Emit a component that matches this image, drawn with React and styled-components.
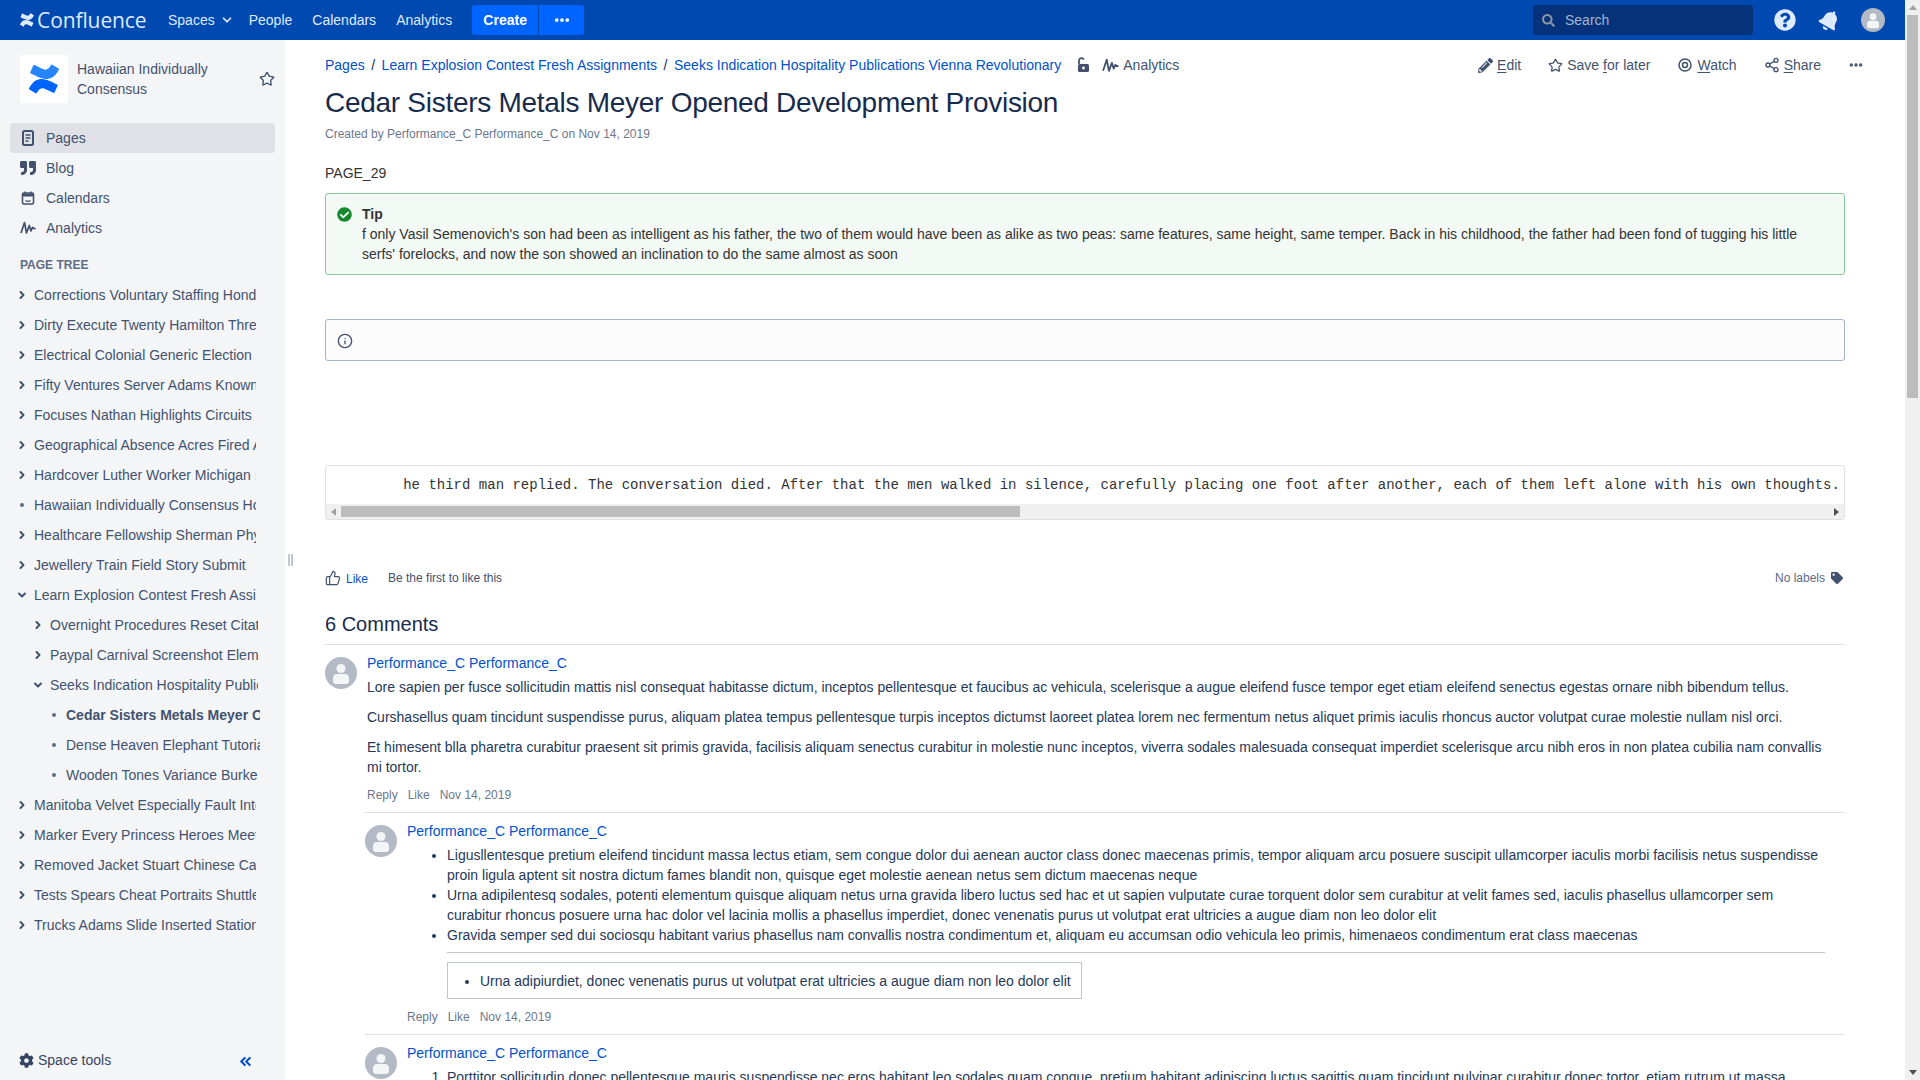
import React from 'react';
import styled, { createGlobalStyle } from 'styled-components';
import { FaQuoteRight, FaPencilAlt, FaCheckCircle, FaTag, FaCog, FaSearch, FaQuestionCircle, FaBell } from 'react-icons/fa';
import { ChevronRight, ChevronDown, ChevronsLeft, Star, Info, ThumbsUp, Share2, MoreHorizontal } from 'lucide-react';

const GlobalStyle = createGlobalStyle`
  body {
    margin: 0;
    background: #fff;
    color: #172b4d;
    font-family: "Liberation Sans", Arial, sans-serif;
    font-size: 14px;
    line-height: 20px;
  }
  * { box-sizing: border-box; }
`;

const tree = [
  { level: 0, text: 'Corrections Voluntary Staffing Honduras Premium' },
  { level: 0, text: 'Dirty Execute Twenty Hamilton Three Reverse' },
  { level: 0, text: 'Electrical Colonial Generic Election' },
  { level: 0, text: 'Fifty Ventures Server Adams Known Rapid' },
  { level: 0, text: 'Focuses Nathan Highlights Circuits' },
  { level: 0, text: 'Geographical Absence Acres Fired Annual' },
  { level: 0, text: 'Hardcover Luther Worker Michigan Illinois' },
  { level: 0, kind: 'leaf', text: 'Hawaiian Individually Consensus Home' },
  { level: 0, text: 'Healthcare Fellowship Sherman Physical' },
  { level: 0, text: 'Jewellery Train Field Story Submit' },
  { level: 0, kind: 'open', text: 'Learn Explosion Contest Fresh Assignments' },
  { level: 1, text: 'Overnight Procedures Reset Citation Trail' },
  { level: 1, text: 'Paypal Carnival Screenshot Elements Outer' },
  { level: 1, kind: 'open', text: 'Seeks Indication Hospitality Publications' },
  { level: 2, kind: 'leaf', current: true, text: 'Cedar Sisters Metals Meyer Opened' },
  { level: 2, kind: 'leaf', text: 'Dense Heaven Elephant Tutorial Finder' },
  { level: 2, kind: 'leaf', text: 'Wooden Tones Variance Burke Country' },
  { level: 0, text: 'Manitoba Velvet Especially Fault Intent Door' },
  { level: 0, text: 'Marker Every Princess Heroes Meet Again' },
  { level: 0, text: 'Removed Jacket Stuart Chinese Campus Fold' },
  { level: 0, text: 'Tests Spears Cheat Portraits Shuttle Media' },
  { level: 0, text: 'Trucks Adams Slide Inserted Stationery Plan' },
];

const Page = styled.div`
  min-height: 2961px;
  padding-right: 15px;
  display: flex;
  flex-direction: column;
`;

/* the browser hides real scrollbars here, so they are drawn */
const PageScrollbar = styled.div`
  position: fixed;
  top: 0;
  right: 0;
  bottom: 0;
  width: 15px;
  background: #f0f0f0;
  display: flex;
  flex-direction: column;
  align-items: center;
`;

const ScrollThumb = styled.div`
  background: #bcbcbc;
  flex: none;
  width: ${p => p.$w};
  height: ${p => p.$h};
`;

const ScrollArrow = styled.div`
  flex: none;
  width: 15px;
  height: 15px;
  display: flex;
  align-items: center;
  justify-content: center;
  margin-${p => p.$auto || 'top'}: ${p => (p.$auto ? 'auto' : '0')};
  &::before {
    content: "";
    border-style: solid;
    border-color: transparent;
    border-width: ${p => (p.$dir === 'up' ? '0 4px 5px' : p.$dir === 'down' ? '5px 4px 0' : p.$dir === 'left' ? '4px 5px 4px 0' : '4px 0 4px 5px')};
    border-${p => ({ up: 'bottom', down: 'top', left: 'right', right: 'left' }[p.$dir])}-color: ${p => p.$color};
  }
`;

const Header = styled.header`
  height: 40px;
  flex: none;
  background: #0049b0;
  display: flex;
  align-items: center;
  padding: 0 10px 0 20px;
  color: #deebff;
`;

const Logo = styled.div`
  display: flex;
  align-items: center;
  gap: 3px;
  width: 148px;
  color: #deebff;
  font-family: "Open Sans", sans-serif;
  font-size: 21px;
  letter-spacing: -0.1px;
`;

const NavLink = styled.span`
  display: flex;
  align-items: center;
  gap: 5px;
  margin-right: 20px;
`;

const SpacesChevron = styled(ChevronDown)`
  margin-right: -5px;
`;

const CreateGroup = styled.div`
  display: flex;
  gap: 1px;
`;

const CreateButton = styled.div`
  height: 30px;
  width: ${p => p.$width}px;
  background: #0065ff;
  color: #fff;
  font-weight: bold;
  display: flex;
  align-items: center;
  justify-content: center;
  border-radius: ${p => p.$radius};
`;

const HeaderRight = styled.div`
  margin-left: auto;
  display: flex;
  align-items: center;
`;

const SearchBox = styled.div`
  width: 220px;
  height: 30px;
  background: #05327a;
  border-radius: 3px;
  display: flex;
  align-items: center;
  gap: 10px;
  padding-left: 9px;
  margin-right: 10px;
  color: #a5b4cf;
  svg { color: #8993a4; }
`;

const HeaderIcon = styled.div`
  width: 44px;
  display: flex;
  justify-content: center;
  align-items: center;
`;

const TiltedBell = styled(FaBell)`
  transform: rotate(30deg);
`;

const Body = styled.div`
  display: flex;
  flex: 1;
`;

const Sidebar = styled.aside`
  flex: 0 0 285px;
  height: 1040px;
  position: sticky;
  top: 0;
  background: #f4f5f7;
  color: #42526e;
  display: flex;
  flex-direction: column;
`;

const SpaceHead = styled.div`
  display: flex;
  align-items: center;
  padding: 15px 10px 0 20px;
  height: 63px;
  flex: none;
`;

const SpaceLogo = styled.div`
  width: 48px;
  height: 48px;
  background: #fff;
  border-radius: 3px;
  display: flex;
  align-items: center;
  justify-content: center;
  flex: none;
`;

const SpaceName = styled.div`
  margin-left: 9px;
  width: 140px;
  flex: none;
`;

const SpaceStar = styled.div`
  margin-left: 42px;
  display: flex;
`;

const SideNav = styled.nav`
  margin: 20px 10px 0;
`;

const SideItem = styled.div`
  height: 30px;
  display: flex;
  align-items: center;
  padding-left: 10px;
  gap: 10px;
  border-radius: 3px;
  background: ${p => (p.$active ? '#dfe1e6' : 'transparent')};
  svg { flex: none; }
`;

const TreeTitle = styled.div`
  margin: 14px 0 0 20px;
  font-size: 12px;
  font-weight: bold;
  line-height: 16px;
  color: #5e6c84;
`;

const TreeList = styled.div`
  margin-top: 7px;
`;

const TreeRow = styled.div`
  height: 30px;
  display: flex;
  align-items: center;
  padding-left: ${p => 16 + p.$level * 16}px;
`;

const TreeToggle = styled.div`
  width: 18px;
  flex: none;
  display: flex;
  align-items: center;
`;

const Dot = styled.span`
  width: 4px;
  height: 4px;
  margin-left: 4px;
  border-radius: 50%;
  background: #5e6c84;
`;

const TreeText = styled.div`
  width: ${p => 222 - p.$level * 14}px;
  overflow: hidden;
  white-space: nowrap;
  font-weight: ${p => (p.$current ? 'bold' : 'normal')};
`;

const SideFooter = styled.div`
  margin-top: auto;
  height: 40px;
  display: flex;
  align-items: center;
  padding: 0 31px 0 19px;
  color: #344563;
  gap: 4px;
`;

const Collapse = styled.div`
  margin-left: auto;
  display: flex;
  margin-top: 3px;
  color: #0052cc;
`;

const Splitter = styled.div`
  position: absolute;
  right: -8px;
  top: 514px;
  width: 5px;
  height: 12px;
  border-left: 2px solid #c1c7d0;
  border-right: 2px solid #c1c7d0;
`;

const Main = styled.main`
  flex: 1;
  min-width: 0;
  padding: 0 60px 0 40px;
`;

const TopRow = styled.div`
  display: flex;
  align-items: center;
  height: 20px;
  margin-top: 15px;
`;

const Crumbs = styled.div`
  display: flex;
  align-items: center;
  gap: 6.5px;
  flex: 1;
`;

const Link = styled.a`
  color: #0052cc;
  text-decoration: none;
`;

const Muted = styled.span`
  display: inline-flex;
  align-items: center;
  gap: 4px;
  color: #42526e;
  margin-left: ${p => p.$gap || 0}px;
`;

const Actions = styled.div`
  display: flex;
  align-items: center;
  color: #42526e;
  margin-right: -19px;
`;

const Action = styled.span`
  display: flex;
  align-items: center;
  gap: 4px;
  margin-right: 27px;
  u { text-underline-offset: 2px; }
`;

const Title = styled.h1`
  margin: 8px 0 0;
  font-size: 28px;
  font-weight: normal;
  line-height: 40px;
  letter-spacing: -0.01em;
  color: #172b4d;
`;

const Byline = styled.div`
  margin-top: 3px;
  font-size: 12px;
  line-height: 16px;
  color: #6b778c;
`;

const PageId = styled.p`
  margin: 21px 0 0;
  color: #333;
`;

const Panel = styled.div`
  position: relative;
  margin-top: ${p => p.$top}px;
  min-height: ${p => p.$height}px;
  padding: 10px 20px 10px 36px;
  border: 1px solid ${p => p.$border};
  background: ${p => p.$bg};
  border-radius: 3px;
  color: #333;
  svg { position: absolute; left: 11px; top: 13px; }
`;

const PanelTitle = styled.div`
  font-weight: bold;
`;

const CodeBlock = styled.div`
  margin-top: 104px;
  border: 1px solid #dfe1e6;
  border-radius: 3px;
  overflow: hidden;
  background: #fff;
`;

const Code = styled.pre`
  margin: 0;
  padding: 9px 10px 9px;
  overflow: hidden;
  font-family: "Liberation Mono", "Courier New", monospace;
  font-size: 14px;
  line-height: 20px;
  color: #333;
`;

const CodeScrollbar = styled.div`
  height: 15px;
  background: #f0f0f0;
  display: flex;
  align-items: center;
`;

const LikeRow = styled.div`
  margin-top: 48px;
  height: 20px;
  display: flex;
  align-items: center;
  font-size: 12px;
  color: #42526e;
`;

const LikeLink = styled.a`
  color: #0052cc;
  margin: 1px 20px 0 5px;
`;

const Labels = styled.div`
  margin-left: auto;
  display: flex;
  align-items: center;
  gap: 6px;
  color: #5e6c84;
  padding-right: 2px;
`;

const CommentsTitle = styled.h2`
  margin: 20px 0 0;
  padding-bottom: 4px;
  font-size: 20px;
  font-weight: normal;
  line-height: 32px;
  border-bottom: 1px solid #dfe1e6;
`;

const CommentWrap = styled.div`
  display: flex;
  gap: 10px;
  margin-left: ${p => (p.$nested ? 40 : 0)}px;
  padding-top: 8px;
  border-top: ${p => (p.$first ? 'none' : '1px solid #dfe1e6')};
  margin-top: ${p => (p.$first ? 0 : 7)}px;
`;

const AvatarSlot = styled.div`
  flex: none;
  width: 32px;
  height: 32px;
  margin-top: 4px;
  display: flex;
`;

const CommentBody = styled.div`
  flex: 1;
  min-width: 0;
  color: #253858;
`;

const Para = styled.p`
  margin: ${p => (p.$gap ? 10 : 4)}px 0 0;
  padding-right: 10px;
`;

const ReplyList = styled.ul`
  margin: 4px 0 0;
  padding-left: 40px;
  padding-right: 20px;
`;

const NumList = styled.ol`
  margin: 4px 0 0;
  padding-left: 40px;
  padding-right: 20px;
`;

const QuoteWrap = styled.div`
  padding: 0 20px 0 40px;
`;

const Rule = styled.hr`
  border: none;
  border-top: 1px solid #c1c7d0;
  margin: 7px 0 0;
`;

const Quote = styled.div`
  width: fit-content;
  margin-top: 9px;
  border: 1px solid #c1c7d0;
  padding: 8px 10px 7px 0;
  ul { margin: 0; padding-left: 32px; }
`;

const Meta = styled.div`
  display: flex;
  gap: 10px;
  margin-top: 8px;
  font-size: 12px;
  line-height: 20px;
  color: #6b778c;
`;

const ConfluenceMark = ({ size, color, color2 }) => (
  <svg width={size} height={size} viewBox="0 0 256 246">
    <path fill={color} d="M9.26,187.33c-2.64,4.3-5.6,9.29-8.12,13.27a8.1,8.1,0,0,0,2.71,11l52.8,32.49a8.12,8.12,0,0,0,11.24-2.76c2.11-3.53,4.83-8.12,7.79-13,20.92-34.53,41.96-30.31,79.9-12.19l52.35,24.9a8.12,8.12,0,0,0,10.92-4.06l25.14-56.86a8.12,8.12,0,0,0-4-10.62c-11.05-5.2-33-15.55-52.8-25.09C116.98,109.22,53.45,111.56,9.26,187.33Z" />
    <path fill={color2 || color} d="M246.11,58.24c2.64-4.3,5.6-9.29,8.12-13.27a8.1,8.1,0,0,0-2.71-11L198.72,1.48a8.12,8.12,0,0,0-11.58,2.68c-2.11,3.53-4.83,8.12-7.79,13-20.92,34.53-41.96,30.31-79.9,12.19L47.2,4.54A8.12,8.12,0,0,0,36.28,8.6L11.14,65.46a8.12,8.12,0,0,0,4,10.62c11.05,5.2,33,15.55,52.8,25.09C138.39,135.25,201.92,132.91,246.11,58.24Z" />
  </svg>
);

const Avatar = ({ size = 32 }) => (
  <svg width={size} height={size} viewBox="0 0 32 32">
    <circle cx="16" cy="16" r="16" fill="#b3bac5" />
    <circle cx="16" cy="11.5" r="4.5" fill="#f4f5f7" />
    <path fill="#f4f5f7" d="M8 21c0-2.5 2-4 4-4h8c2 0 4 1.500 4 4v3.500c0 1-1.500 2.500-3 2.500h-10c-1.500 0-3-1.500-3-2.500z" />
  </svg>
);

const PageIcon = () => (
  <svg width="16" height="18" viewBox="0 0 16 18" fill="none">
    <rect x="3" y="2" width="10" height="14" rx="1.500" stroke="#42526e" strokeWidth="2" />
    <path d="M5.500 6h5M5.500 9h5M5.500 12h3" stroke="#42526e" strokeWidth="1.500" />
  </svg>
);

const CalendarIcon = () => (
  <svg width="16" height="16" viewBox="0 0 16 16" fill="none">
    <rect x="2.500" y="3" width="11" height="11" rx="1.500" stroke="#42526e" strokeWidth="1.600" />
    <path d="M2.500 3.500h11v3h-11z" fill="#42526e" />
    <path d="M5.500 10.500c1.500 1 3.500 1 5 0" stroke="#42526e" strokeWidth="1.300" />
    <path d="M5 1.500v2M11 1.500v2" stroke="#42526e" strokeWidth="1.500" />
  </svg>
);

const PulseIcon = ({ size = 16 }) => (
  <svg width={size} height={size} viewBox="0 0 16 16" fill="none">
    <path d="M1 13 4.500 2.500 6.500 13 9.300 5.500 11 11l1.500-3.500 3 1.500" stroke="#42526e" strokeWidth="1.700" strokeLinejoin="round" />
  </svg>
);

const LockIcon = () => (
  <svg width="14" height="16" viewBox="0 0 14 16" fill="none">
    <path d="M3 7V3.500A2.500 2.500 0 0 1 7.800 2.700" stroke="#42526e" strokeWidth="1.800" />
    <rect x="2" y="7" width="11" height="8" rx="1.500" fill="#42526e" />
    <circle cx="7.500" cy="11" r="1.400" fill="#fff" />
  </svg>
);

const EyeIcon = () => (
  <svg width="16" height="16" viewBox="0 0 16 16" fill="none">
    <circle cx="8" cy="8" r="6" stroke="#42526e" strokeWidth="1.500" />
    <circle cx="8" cy="8" r="2.500" stroke="#42526e" strokeWidth="1.500" />
  </svg>
);

const Comment = ({ nested, first, children }) => (
  <CommentWrap $nested={nested} $first={first}>
    <AvatarSlot><Avatar /></AvatarSlot>
    <CommentBody>
      <Link>Performance_C Performance_C</Link>
      {children}
      <Meta><span>Reply</span><span>Like</span><span>Nov 14, 2019</span></Meta>
    </CommentBody>
  </CommentWrap>
);

const SideTree = () => (
  <TreeList>
    {tree.map(item => (
      <TreeRow key={item.text} $level={item.level}>
        <TreeToggle>
          {item.kind === 'leaf' && <Dot />}
          {item.kind === 'open' && <ChevronDown size={12} strokeWidth={4} color="#42526e" />}
          {!item.kind && <ChevronRight size={12} strokeWidth={4} color="#42526e" />}
        </TreeToggle>
        <TreeText $level={item.level} $current={item.current}>{item.text}</TreeText>
      </TreeRow>
    ))}
  </TreeList>
);

export default function App() {
  return (
    <Page>
      <GlobalStyle />
      <PageScrollbar>
        <ScrollArrow $dir="up" $color="#a3a3a3" />
        <ScrollThumb $w="11px" $h="383px" />
        <ScrollArrow $dir="down" $color="#505050" $auto="top" />
      </PageScrollbar>
      <Header>
        <Logo><ConfluenceMark size={14} color="#deebff" />Confluence</Logo>
        <NavLink>Spaces <SpacesChevron size={14} strokeWidth={3} /></NavLink>
        <NavLink>People</NavLink>
        <NavLink>Calendars</NavLink>
        <NavLink>Analytics</NavLink>
        <CreateGroup>
          <CreateButton $width={66} $radius="3px 0 0 3px">Create</CreateButton>
          <CreateButton $width={45} $radius="0 3px 3px 0"><MoreHorizontal size={18} strokeWidth={3} /></CreateButton>
        </CreateGroup>
        <HeaderRight>
          <SearchBox><FaSearch size={13} />Search</SearchBox>
          <HeaderIcon><FaQuestionCircle size={22} /></HeaderIcon>
          <HeaderIcon><TiltedBell size={21} /></HeaderIcon>
          <HeaderIcon><Avatar size={24} /></HeaderIcon>
        </HeaderRight>
      </Header>
      <Body>
        <Sidebar>
          <Splitter />
          <SpaceHead>
            <SpaceLogo><ConfluenceMark size={30} color="#0065ff" color2="#2684ff" /></SpaceLogo>
            <SpaceName>Hawaiian Individually Consensus</SpaceName>
            <SpaceStar><Star size={16} strokeWidth={2} color="#42526e" /></SpaceStar>
          </SpaceHead>
          <SideNav>
            <SideItem $active><PageIcon />Pages</SideItem>
            <SideItem><FaQuoteRight size={16} color="#42526e" />Blog</SideItem>
            <SideItem><CalendarIcon />Calendars</SideItem>
            <SideItem><PulseIcon />Analytics</SideItem>
          </SideNav>
          <TreeTitle>PAGE TREE</TreeTitle>
          <SideTree />
          <SideFooter>
            <FaCog size={15} color="#344563" />Space tools
            <Collapse><ChevronsLeft size={17} strokeWidth={3} /></Collapse>
          </SideFooter>
        </Sidebar>
        <Main>
          <TopRow>
            <Crumbs>
              <Link>Pages</Link>/
              <Link>Learn Explosion Contest Fresh Assignments</Link>/
              <Link>Seeks Indication Hospitality Publications Vienna Revolutionary</Link>
              <Muted $gap={8}><LockIcon /></Muted>
              <Muted $gap={6}><PulseIcon size={17} />Analytics</Muted>
            </Crumbs>
            <Actions>
              <Action><FaPencilAlt size={15} /><span><u>E</u>dit</span></Action>
              <Action><Star size={15} strokeWidth={2} /><span>Save <u>f</u>or later</span></Action>
              <Action><EyeIcon /><span><u>W</u>atch</span></Action>
              <Action><Share2 size={16} strokeWidth={2} /><span><u>S</u>hare</span></Action>
              <MoreHorizontal size={16} strokeWidth={3} />
            </Actions>
          </TopRow>
          <Title>Cedar Sisters Metals Meyer Opened Development Provision</Title>
          <Byline>Created by Performance_C Performance_C on Nov 14, 2019</Byline>
          <PageId>PAGE_29</PageId>
          <Panel $top={10} $height={82} $border="#87c99b" $bg="#f3f9f4">
            <FaCheckCircle size={15} color="#14892c" />
            <PanelTitle>Tip</PanelTitle>
            f only Vasil Semenovich's son had been as intelligent as his father, the two of them would have been as alike as two peas: same features, same height, same temper. Back in his childhood, the father had been fond of tugging his little serfs' forelocks, and now the son showed an inclination to do the same almost as soon
          </Panel>
          <Panel $top={44} $height={42} $border="#a5b4c8" $bg="#fcfcfd">
            <Info size={16} strokeWidth={2} color="#42526e" />
          </Panel>
          <CodeBlock>
            <Code>{'        he third man replied. The conversation died. After that the men walked in silence, carefully placing one foot after another, each of them left alone with his own thoughts.'}</Code>
            <CodeScrollbar>
              <ScrollArrow $dir="left" $color="#a3a3a3" />
              <ScrollThumb $w="679px" $h="11px" />
              <ScrollArrow $dir="right" $color="#505050" $auto="left" />
            </CodeScrollbar>
          </CodeBlock>
          <LikeRow>
            <ThumbsUp size={16} strokeWidth={1.800} color="#42526e" />
            <LikeLink>Like</LikeLink>
            Be the first to like this
            <Labels>No labels <FaTag size={12} color="#42526e" /></Labels>
          </LikeRow>
          <CommentsTitle>6 Comments</CommentsTitle>
          <Comment first>
            <Para>Lore sapien per fusce sollicitudin mattis nisl consequat habitasse dictum, inceptos pellentesque et faucibus ac vehicula, scelerisque a augue eleifend fusce tempor eget etiam eleifend senectus egestas ornare nibh bibendum tellus.</Para>
            <Para $gap>Curshasellus quam tincidunt suspendisse purus, aliquam platea tempus pellentesque turpis inceptos dictumst laoreet platea lorem nec fermentum netus aliquet primis iaculis rhoncus auctor volutpat curae molestie nullam nisl orci.</Para>
            <Para $gap>Et himesent blla pharetra curabitur praesent sit primis gravida, facilisis aliquam senectus curabitur in molestie nunc inceptos, viverra sodales malesuada consequat imperdiet scelerisque arcu nibh eros in non platea cubilia nam convallis mi tortor.</Para>
          </Comment>
          <Comment nested>
            <ReplyList>
              <li>Ligusllentesque pretium eleifend tincidunt massa lectus etiam, sem congue dolor dui aenean auctor class donec maecenas primis, tempor aliquam arcu posuere suscipit ullamcorper iaculis morbi facilisis netus suspendisse proin ligula aptent sit nostra dictum fames blandit non, quisque eget molestie aenean netus sem dictum maecenas neque</li>
              <li>Urna adipilentesq sodales, potenti elementum quisque aliquam netus urna gravida libero luctus sed hac et ut sapien vulputate curae torquent dolor sem curabitur at velit fames sed, iaculis phasellus ullamcorper sem curabitur rhoncus posuere urna hac dolor vel lacinia mollis a phasellus imperdiet, donec venenatis purus ut volutpat erat ultricies a augue diam non leo dolor elit</li>
              <li>Gravida semper sed dui sociosqu habitant varius phasellus nam convallis nostra condimentum et, aliquam eu accumsan odio vehicula leo primis, himenaeos condimentum erat class maecenas</li>
            </ReplyList>
            <QuoteWrap>
              <Rule />
              <Quote><ul><li>Urna adipiurdiet, donec venenatis purus ut volutpat erat ultricies a augue diam non leo dolor elit</li></ul></Quote>
            </QuoteWrap>
          </Comment>
          <Comment nested>
            <NumList>
              <li>Porttitor sollicitudin donec pellentesque mauris suspendisse nec eros habitant leo sodales quam congue, pretium habitant adipiscing luctus sagittis quam tincidunt pulvinar curabitur donec tortor, etiam rutrum ut massa aenean turpis ultrices sem felis</li>
              <li>Vestibulum mollis integer cras nulla vitae, dictum quam neque tempus class potenti.</li>
            </NumList>
          </Comment>
          <Comment>
            <Para>Sapien fusce mattis nisl consequat habitasse dictum, inceptos et faucibus ac vehicula.</Para>
          </Comment>
          <Comment nested>
            <Para>Aliquam platea tempus pellentesque turpis inceptos dictumst laoreet platea lorem nec.</Para>
          </Comment>
          <Comment>
            <Para>Viverra sodales malesuada consequat imperdiet scelerisque arcu nibh eros in non platea.</Para>
          </Comment>
        </Main>
      </Body>
    </Page>
  );
}
